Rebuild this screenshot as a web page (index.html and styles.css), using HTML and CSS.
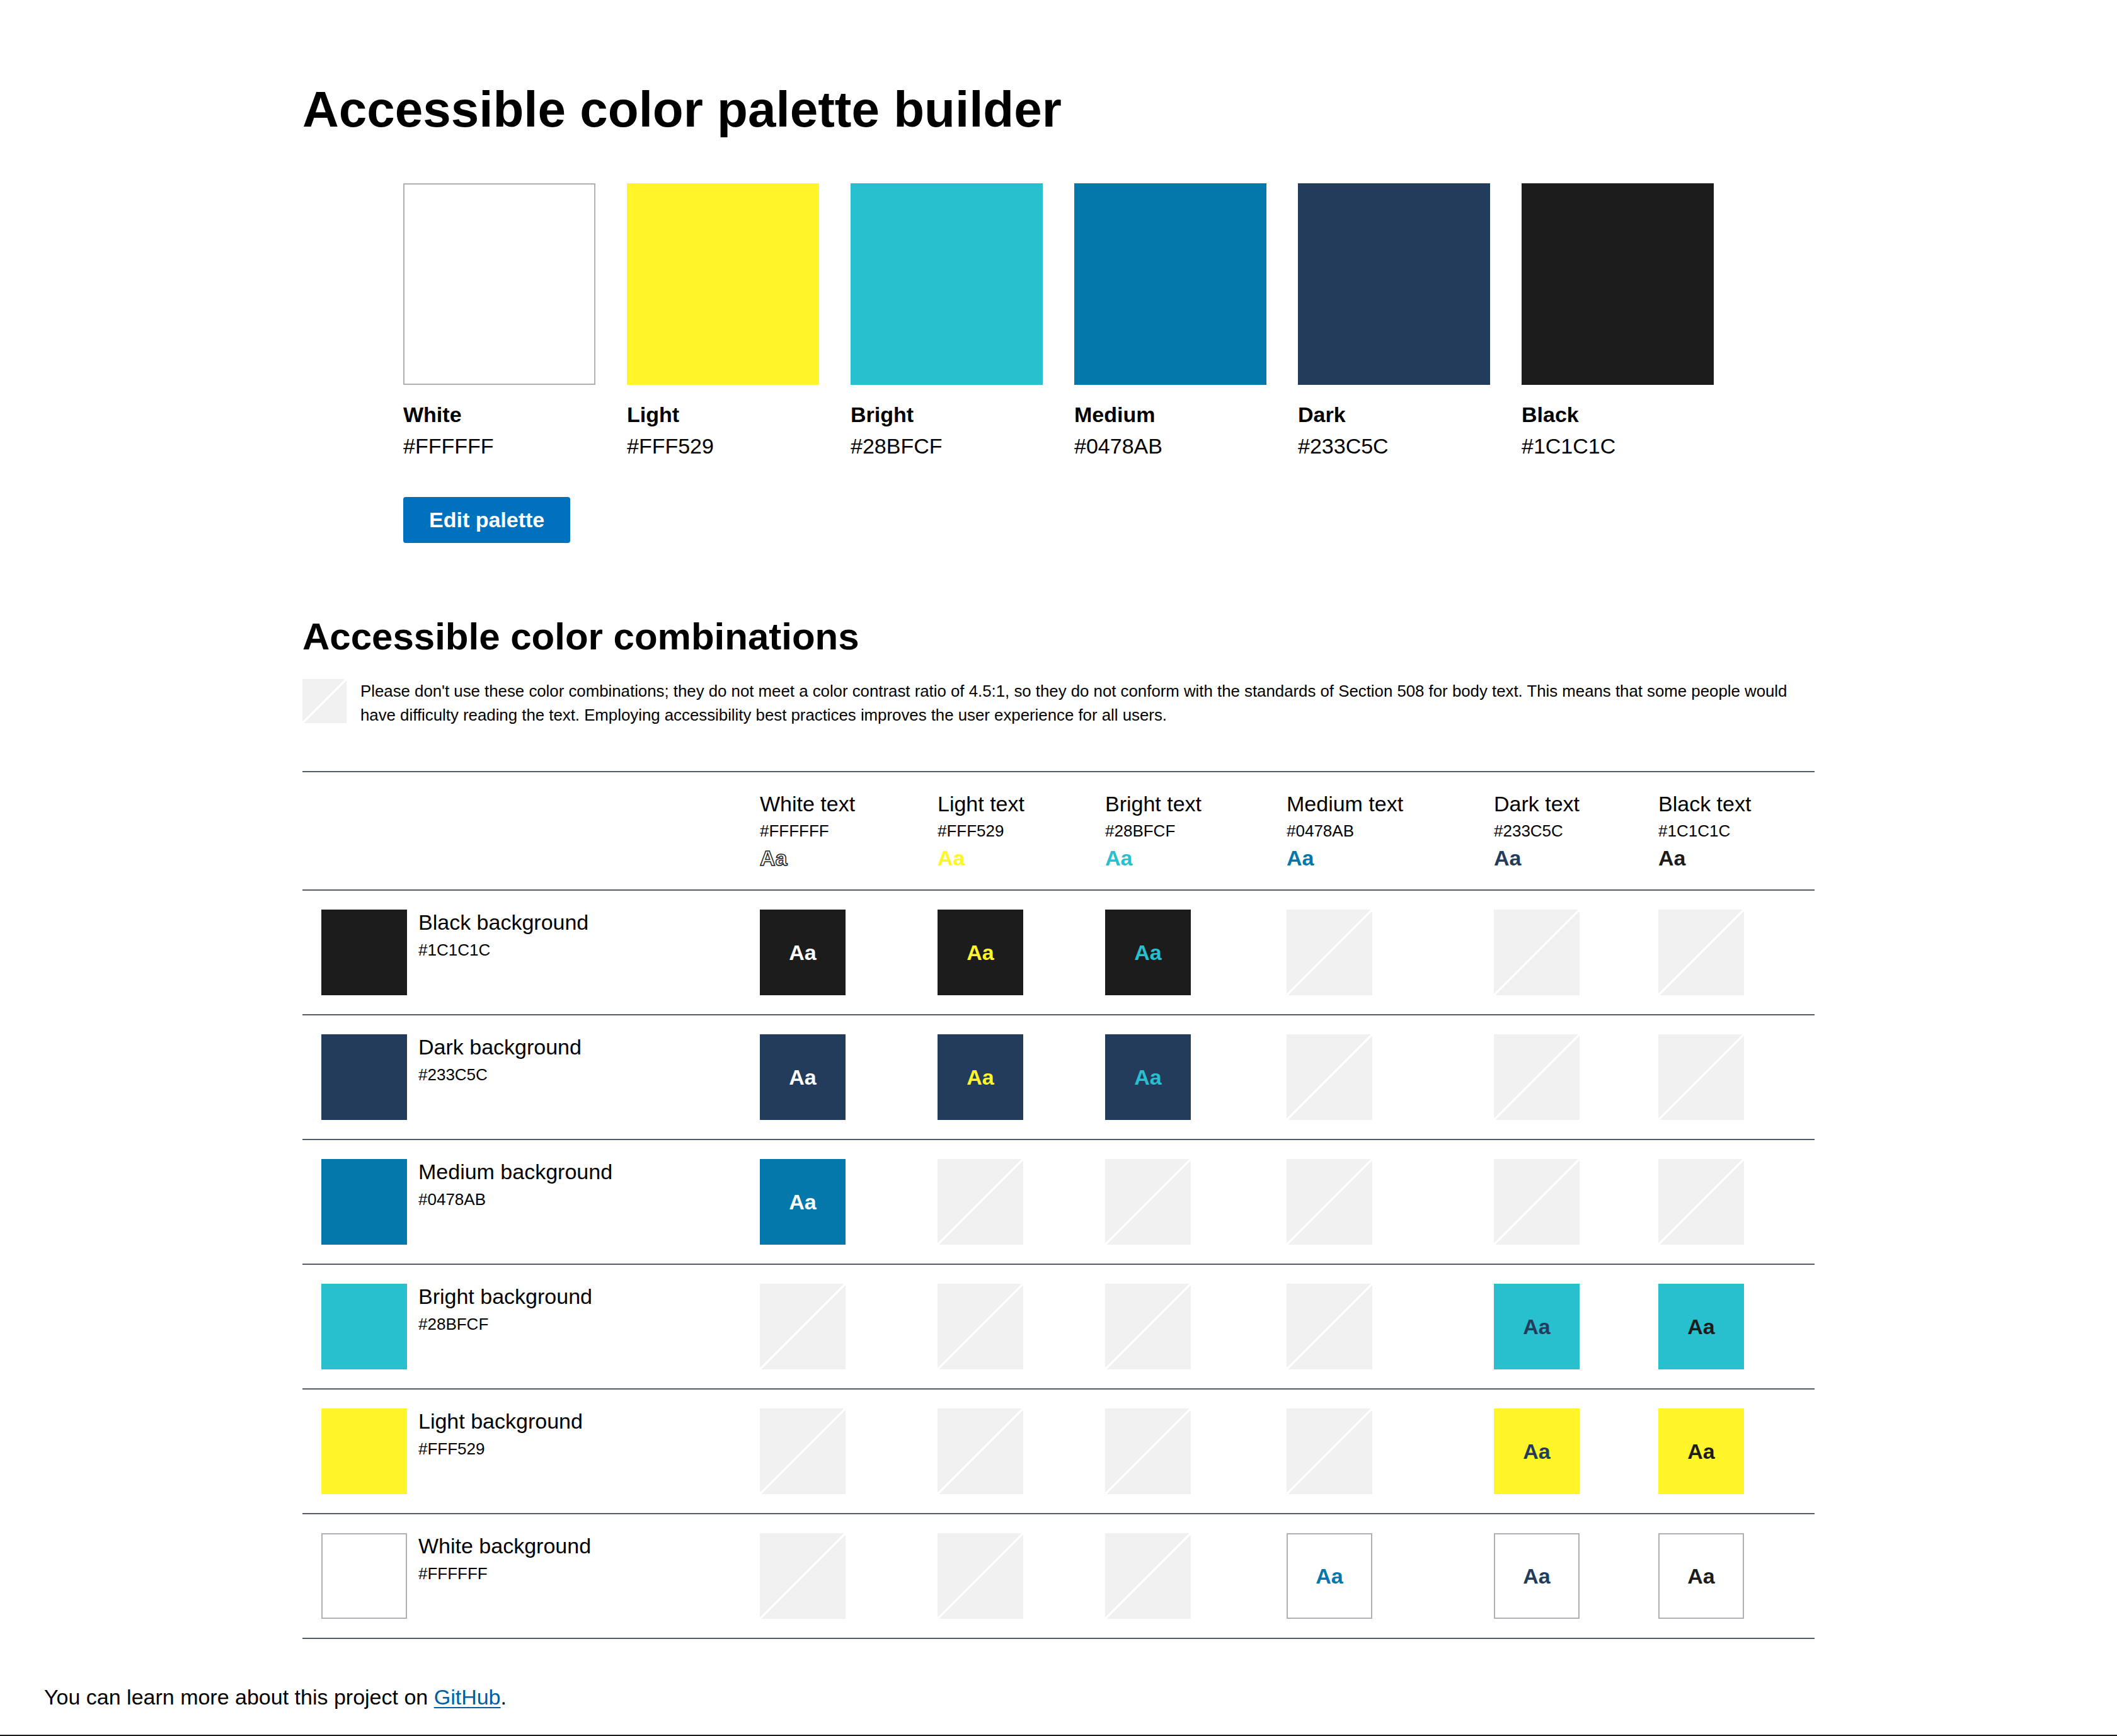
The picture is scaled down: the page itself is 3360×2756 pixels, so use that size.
FILE: index.html
```html
<!DOCTYPE html>
<html lang="en">
<head>
<meta charset="utf-8">
<title>Accessible color palette builder</title>
<link rel="stylesheet" href="styles.css">
</head>
<body>
<main class="container">
  <h1 class="title">Accessible color palette builder</h1>

  <ul class="palette">
    <li class="palette-item">
      <div class="swatch swatch-white bordered"></div>
      <div class="palette-name">White</div>
      <div class="palette-hex">#FFFFFF</div>
    </li>
    <li class="palette-item">
      <div class="swatch swatch-light"></div>
      <div class="palette-name">Light</div>
      <div class="palette-hex">#FFF529</div>
    </li>
    <li class="palette-item">
      <div class="swatch swatch-bright"></div>
      <div class="palette-name">Bright</div>
      <div class="palette-hex">#28BFCF</div>
    </li>
    <li class="palette-item">
      <div class="swatch swatch-medium"></div>
      <div class="palette-name">Medium</div>
      <div class="palette-hex">#0478AB</div>
    </li>
    <li class="palette-item">
      <div class="swatch swatch-dark"></div>
      <div class="palette-name">Dark</div>
      <div class="palette-hex">#233C5C</div>
    </li>
    <li class="palette-item">
      <div class="swatch swatch-black"></div>
      <div class="palette-name">Black</div>
      <div class="palette-hex">#1C1C1C</div>
    </li>
  </ul>

  <button class="btn-edit" type="button">Edit palette</button>

  <h2 class="subtitle">Accessible color combinations</h2>

  <div class="warning">
    <div class="na-box na-small"></div>
    <p class="warning-text">Please don't use these color combinations; they do not meet a color contrast ratio of 4.5:1, so they do not conform with the standards of Section 508 for body text. This means that some people would have difficulty reading the text. Employing accessibility best practices improves the user experience for all users.</p>
  </div>

  <table class="combos">
    <colgroup>
      <col class="col-bg">
      <col class="col-white">
      <col class="col-light">
      <col class="col-bright">
      <col class="col-medium">
      <col class="col-dark">
      <col class="col-black">
    </colgroup>
    <thead>
      <tr>
        <th class="head-first"></th>
        <th><div class="head-name">White text</div><div class="head-hex">#FFFFFF</div><div class="head-aa aa-outline">Aa</div></th>
        <th><div class="head-name">Light text</div><div class="head-hex">#FFF529</div><div class="head-aa t-light">Aa</div></th>
        <th><div class="head-name">Bright text</div><div class="head-hex">#28BFCF</div><div class="head-aa t-bright">Aa</div></th>
        <th><div class="head-name">Medium text</div><div class="head-hex">#0478AB</div><div class="head-aa t-medium">Aa</div></th>
        <th><div class="head-name">Dark text</div><div class="head-hex">#233C5C</div><div class="head-aa t-dark">Aa</div></th>
        <th><div class="head-name">Black text</div><div class="head-hex">#1C1C1C</div><div class="head-aa t-black">Aa</div></th>
      </tr>
    </thead>
    <tbody>
      <tr>
        <th class="row-head" scope="row">
          <div class="row-swatch bg-black"></div>
          <div class="row-label"><div class="row-name">Black background</div><div class="row-hex">#1C1C1C</div></div>
        </th>
        <td><div class="sample bg-black t-white">Aa</div></td>
        <td><div class="sample bg-black t-light">Aa</div></td>
        <td><div class="sample bg-black t-bright">Aa</div></td>
        <td><div class="na-box" aria-label="Not accessible"></div></td>
        <td><div class="na-box" aria-label="Not accessible"></div></td>
        <td><div class="na-box" aria-label="Not accessible"></div></td>
      </tr>
      <tr>
        <th class="row-head" scope="row">
          <div class="row-swatch bg-dark"></div>
          <div class="row-label"><div class="row-name">Dark background</div><div class="row-hex">#233C5C</div></div>
        </th>
        <td><div class="sample bg-dark t-white">Aa</div></td>
        <td><div class="sample bg-dark t-light">Aa</div></td>
        <td><div class="sample bg-dark t-bright">Aa</div></td>
        <td><div class="na-box" aria-label="Not accessible"></div></td>
        <td><div class="na-box" aria-label="Not accessible"></div></td>
        <td><div class="na-box" aria-label="Not accessible"></div></td>
      </tr>
      <tr>
        <th class="row-head" scope="row">
          <div class="row-swatch bg-medium"></div>
          <div class="row-label"><div class="row-name">Medium background</div><div class="row-hex">#0478AB</div></div>
        </th>
        <td><div class="sample bg-medium t-white">Aa</div></td>
        <td><div class="na-box" aria-label="Not accessible"></div></td>
        <td><div class="na-box" aria-label="Not accessible"></div></td>
        <td><div class="na-box" aria-label="Not accessible"></div></td>
        <td><div class="na-box" aria-label="Not accessible"></div></td>
        <td><div class="na-box" aria-label="Not accessible"></div></td>
      </tr>
      <tr>
        <th class="row-head" scope="row">
          <div class="row-swatch bg-bright"></div>
          <div class="row-label"><div class="row-name">Bright background</div><div class="row-hex">#28BFCF</div></div>
        </th>
        <td><div class="na-box" aria-label="Not accessible"></div></td>
        <td><div class="na-box" aria-label="Not accessible"></div></td>
        <td><div class="na-box" aria-label="Not accessible"></div></td>
        <td><div class="na-box" aria-label="Not accessible"></div></td>
        <td><div class="sample bg-bright t-dark">Aa</div></td>
        <td><div class="sample bg-bright t-black">Aa</div></td>
      </tr>
      <tr>
        <th class="row-head" scope="row">
          <div class="row-swatch bg-light"></div>
          <div class="row-label"><div class="row-name">Light background</div><div class="row-hex">#FFF529</div></div>
        </th>
        <td><div class="na-box" aria-label="Not accessible"></div></td>
        <td><div class="na-box" aria-label="Not accessible"></div></td>
        <td><div class="na-box" aria-label="Not accessible"></div></td>
        <td><div class="na-box" aria-label="Not accessible"></div></td>
        <td><div class="sample bg-light t-dark">Aa</div></td>
        <td><div class="sample bg-light t-black">Aa</div></td>
      </tr>
      <tr>
        <th class="row-head" scope="row">
          <div class="row-swatch bg-white bordered"></div>
          <div class="row-label"><div class="row-name">White background</div><div class="row-hex">#FFFFFF</div></div>
        </th>
        <td><div class="na-box" aria-label="Not accessible"></div></td>
        <td><div class="na-box" aria-label="Not accessible"></div></td>
        <td><div class="na-box" aria-label="Not accessible"></div></td>
        <td><div class="sample bg-white bordered t-medium">Aa</div></td>
        <td><div class="sample bg-white bordered t-dark">Aa</div></td>
        <td><div class="sample bg-white bordered t-black">Aa</div></td>
      </tr>
    </tbody>
  </table>
</main>

<footer class="footer">
  <p class="footer-text">You can learn more about this project on <a class="footer-link" href="#">GitHub</a>.</p>
</footer>
</body>
</html>
```

FILE: styles.css
```css
* {
  box-sizing: border-box;
}

html,
body {
  margin: 0;
  padding: 0;
  background: #fff;
}

body {
  font-family: "Liberation Sans", Arial, Helvetica, sans-serif;
  color: #1b1b1b;
}

.container {
  width: 2400px;
  margin: 0 auto;
}

.title {
  margin: 126px 0 0;
  font-size: 80px;
  line-height: 96px;
  font-weight: 700;
  color: #000;
}

/* Palette */
.palette {
  list-style: none;
  margin: 69px 0 0;
  padding: 0 160px;
  display: grid;
  grid-template-columns: repeat(6, 1fr);
  column-gap: 50px;
}

.palette-item {
  margin: 0;
  padding: 0;
}

.swatch {
  height: 320px;
}

.bordered {
  border: 2px solid #aeb0b5;
}

.swatch-white { background: #ffffff; }
.swatch-light { background: #fff529; }
.swatch-bright { background: #28bfcf; }
.swatch-medium { background: #0478ab; }
.swatch-dark { background: #233c5c; }
.swatch-black { background: #1c1c1c; }

.palette-name {
  margin-top: 22px;
  font-size: 34px;
  line-height: 50px;
  font-weight: 700;
  color: #000;
}

.palette-hex {
  font-size: 34px;
  line-height: 50px;
  color: #000;
}

.btn-edit {
  display: block;
  margin: 56px 0 0 160px;
  height: 73px;
  padding: 0 41px;
  border: none;
  border-radius: 4px;
  background: #0071bc;
  color: #fff;
  font-family: inherit;
  font-size: 34px;
  font-weight: 700;
  line-height: 73px;
  cursor: pointer;
}

.subtitle {
  margin: 113px 0 0;
  font-size: 60px;
  line-height: 72px;
  font-weight: 700;
  color: #000;
}

/* Warning */
.warning {
  margin-top: 31px;
  display: flex;
  align-items: flex-start;
  gap: 22px;
}

.na-box {
  width: 136px;
  height: 136px;
  background:
    linear-gradient(to bottom right,
      rgba(255, 255, 255, 0) calc(50% - 2px),
      #ffffff calc(50% - 2px),
      #ffffff calc(50% + 2px),
      rgba(255, 255, 255, 0) calc(50% + 2px)),
    #f0f0f0;
}

.na-small {
  flex: 0 0 70px;
  width: 70px;
  height: 70px;
}

.warning-text {
  margin: 0;
  font-size: 25.8px;
  line-height: 38px;
  color: #000;
}

/* Table */
.combos {
  margin-top: 70px;
  width: 2400px;
  table-layout: fixed;
  border-collapse: collapse;
  border-top: 2px solid #565c65;
}

.col-bg { width: 726px; }
.col-white { width: 282px; }
.col-light { width: 266px; }
.col-bright { width: 288px; }
.col-medium { width: 329px; }
.col-dark { width: 261px; }
.col-black { width: 248px; }

.combos thead tr,
.combos tbody tr {
  border-bottom: 2px solid #565c65;
}

.combos th,
.combos td {
  padding: 0;
  text-align: left;
  vertical-align: top;
  font-weight: 400;
}

.combos thead th {
  padding: 30px 0;
}

.head-name {
  font-size: 34px;
  line-height: 40px;
  color: #000;
}

.head-hex {
  font-size: 26px;
  line-height: 46px;
  color: #000;
}

.head-aa {
  font-size: 34px;
  line-height: 40px;
  font-weight: 700;
}

.aa-outline {
  color: #fff;
  -webkit-text-stroke: 1.5px #1c1c1c;
}

.combos tbody th,
.combos tbody td {
  padding: 30px 0;
}

.combos tbody th.row-head {
  padding-left: 30px;
}

.row-head {
  display: flex;
  align-items: flex-start;
  gap: 18px;
}

.row-swatch {
  flex: 0 0 136px;
  width: 136px;
  height: 136px;
}

.row-name {
  font-size: 34px;
  line-height: 40px;
  color: #000;
}

.row-hex {
  margin-top: 1px;
  font-size: 26px;
  line-height: 46px;
  color: #000;
}

.sample {
  width: 136px;
  height: 136px;
  text-align: center;
  font-size: 34px;
  line-height: 136px;
  font-weight: 700;
}

.sample.bordered {
  line-height: 132px;
}

.bg-white { background: #ffffff; }
.bg-light { background: #fff529; }
.bg-bright { background: #28bfcf; }
.bg-medium { background: #0478ab; }
.bg-dark { background: #233c5c; }
.bg-black { background: #1c1c1c; }

.t-white { color: #ffffff; }
.t-light { color: #fff529; }
.t-bright { color: #28bfcf; }
.t-medium { color: #0478ab; }
.t-dark { color: #233c5c; }
.t-black { color: #1c1c1c; }

/* Footer */
.footer {
  margin-top: 67px;
  padding: 0 0 34px 70px;
  border-bottom: 2px solid #1b1b1b;
}

.footer-text {
  margin: 0;
  font-size: 34px;
  line-height: 51px;
  color: #000;
}

.footer-link {
  color: #005ea2;
  text-decoration: underline;
  text-decoration-thickness: 2px;
  text-underline-offset: 4px;
}
```
